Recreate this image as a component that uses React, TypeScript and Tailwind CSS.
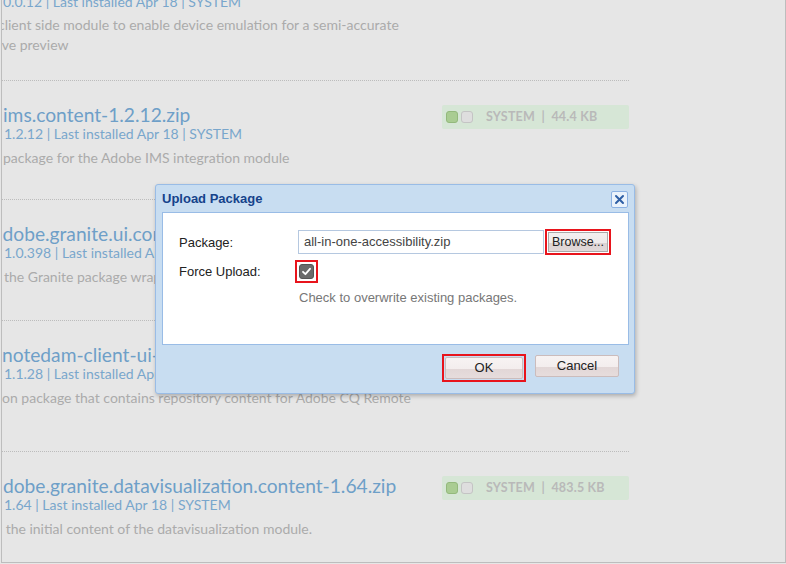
import React from "react";

function Badge({ size }: { size: string }) {
  return (
    <div className="w-[187px] h-[24px] bg-[#d6e6d6] rounded-[2px] flex items-center pl-[4px] shrink-0">
      <span className="w-[12px] h-[12px] rounded-[3px] bg-[#a9cc92] border border-[#93b97c]" />
      <span className="w-[12px] h-[12px] rounded-[3px] bg-[#dedede] border border-[#c4c4c4] ml-[3px]" />
      <span className="ml-[13px] text-[12.5px] font-bold text-[#b9b9b9] tracking-[0.2px] whitespace-pre" style={{ fontFamily: "Lato, 'Noto Sans', sans-serif" }}>
        {"SYSTEM  |  " + size}
      </span>
    </div>
  );
}

function Row({
  h,
  title,
  meta,
  desc,
  badge,
  tOff = 0,
  mOff = 0,
  dOff = 0,
}: {
  h: string;
  title: string;
  meta: string;
  desc: string;
  badge?: string;
  tOff?: number;
  mOff?: number;
  dOff?: number;
}) {
  return (
    <div className={`${h} w-[627px] border-b border-dotted border-[#bcbcbc] flex items-start pt-[22px] shrink-0`}>
      <div className="flex-1 overflow-hidden whitespace-nowrap">
        <div className="text-[19.2px] leading-[23px] text-[#6e9fc8]" style={{ marginLeft: tOff }}>{title}</div>
        <div className="text-[14px] leading-[20px] text-[#79a6cc] mt-[-2px]" style={{ marginLeft: mOff }}>{meta}</div>
        <div className="text-[14px] leading-[20px] text-[#ababab] mt-[4px]" style={{ marginLeft: dOff }}>{desc}</div>
      </div>
      {badge && (
        <div className="mt-[2px]">
          <Badge size={badge} />
        </div>
      )}
    </div>
  );
}

function BtnFace({ children, w }: { children: React.ReactNode; w: string }) {
  return (
    <div className={`${w} h-[22px] rounded-[2px] border border-[#cbbcbc] bg-[linear-gradient(#f7f3f3_0%,#f3eded_55%,#e2d7d7_56%,#e6dcdc_100%)] flex items-center justify-center text-[13px] text-[#222]`}>
      {children}
    </div>
  );
}

export default function App() {
  return (
    <div className="w-[786px] h-[564px] bg-[#e6e6e6] overflow-hidden relative" style={{ fontFamily: "Lato, 'Noto Sans', sans-serif" }}>
      <div className="w-[785px] h-[563px] ml-[1px] border-l border-r border-b border-[#bdbdbd] flex flex-col overflow-hidden">
        {/* row 0 partial */}
        <div className="h-[81px] w-[627px] border-b border-dotted border-[#bcbcbc] shrink-0 overflow-hidden whitespace-nowrap">
          <div className="text-[14px] leading-[20px] text-[#79a6cc] mt-[-8px] ml-[1px]">0.0.12 | Last installed Apr 18 | SYSTEM</div>
          <div className="text-[14px] leading-[20px] text-[#ababab] mt-[3px] ml-[-4px]">client side module to enable device emulation for a semi-accurate</div>
          <div className="text-[14px] leading-[20px] text-[#ababab] ml-[-7px]">live preview</div>
        </div>
        <Row
          h="h-[119px]"
          title="ims.content-1.2.12.zip"
          meta="1.2.12 | Last installed Apr 18 | SYSTEM"
          desc="package for the Adobe IMS integration module"
          badge="44.4 KB"
          tOff={1}
          mOff={2}
          dOff={1}
        />
        <Row
          h="h-[121px]"
          title="adobe.granite.ui.content-1.0.398.zip"
          meta="1.0.398 | Last installed Apr 18 | SYSTEM"
          desc="the Granite package wrapper for the UI"
          tOff={-9}
          mOff={2}
          dOff={2}
        />
        <Row
          h="h-[131px]"
          title="notedam-client-ui-1.1.28.zip"
          meta="1.1.28 | Last installed Apr 18 | SYSTEM"
          desc="on package that contains repository content for Adobe CQ Remote"
          tOff={0}
          mOff={2}
          dOff={0}
        />
        <Row
          h="h-[130px]"
          title="dobe.granite.datavisualization.content-1.64.zip"
          meta="1.64 | Last installed Apr 18 | SYSTEM"
          desc="s the initial content of the datavisualization module."
          badge="483.5 KB"
          tOff={1}
          mOff={2}
          dOff={-6}
        />
      </div>

      {/* dialog */}
      <div
        className="absolute left-[155px] top-[184px] w-[480px] h-[210px] bg-[#c8ddf1] border border-[#99bce6] rounded-[3px] shadow-[1px_2px_4px_rgba(0,0,0,0.25)] flex flex-col pl-[6px] pr-[5px]"
        style={{ fontFamily: "'Liberation Sans', Arial, sans-serif" }}
      >
        <div className="h-[27px] flex items-center justify-between shrink-0">
          <span className="text-[13px] font-bold text-[#15428b] mt-[1px]">Upload Package</span>
          <div className="w-[17px] h-[17px] mr-[1px] mt-[2px] rounded-[2px] border border-[#8db2e3] bg-[#eaf2fb] flex items-center justify-center">
            <svg width="11" height="11" viewBox="0 0 11 11">
              <path d="M2 2 L9 9 M9 2 L2 9" stroke="#2f5fa5" strokeWidth="2" strokeLinecap="round" />
            </svg>
          </div>
        </div>
        <div className="h-[133px] bg-white border border-[#99bce6] shrink-0 pl-[16px] pt-[16px] text-[13px] text-[#222]">
          <div className="flex items-center h-[26px]">
            <span className="w-[119px] mt-[1px]">Package:</span>
            <div className="w-[246px] h-[24px] border border-[#b5c8e0] flex items-center pl-[5px] text-[#444]">
              all-in-one-accessibility.zip
            </div>
            <div className="ml-[1px] border-2 border-[#e8141c] p-[1px]">
              <div className="w-[60px] h-[20px] border border-[#a9a9a9] bg-[linear-gradient(#f3efef_0%,#eeeaea_55%,#dcd2d2_56%,#e2d9d9_100%)] flex items-center justify-center text-[12.5px] text-[#222]">
                Browse...
              </div>
            </div>
          </div>
          <div className="flex items-center h-[23px] mt-[5px]">
            <span className="w-[116px]">Force Upload:</span>
            <div className="w-[23px] h-[23px] border-2 border-[#e8141c] flex items-center justify-center">
              <div className="w-[15px] h-[15px] rounded-[3px] bg-[#6a6a6a] border border-[#555] flex items-center justify-center">
                <svg width="11" height="11" viewBox="0 0 11 11">
                  <path d="M2 5.8 L4.4 8.2 L9 2.8" stroke="#fff" strokeWidth="1.8" fill="none" strokeLinecap="round" strokeLinejoin="round" />
                </svg>
              </div>
            </div>
          </div>
          <div className="ml-[120px] mt-[7px] text-[#777] leading-[16px]">Check to overwrite existing packages.</div>
        </div>
        <div className="flex justify-end items-start pt-[9px] pr-[10px] gap-[9px]">
          <div className="border-2 border-[#e8141c] p-[1px]">
            <BtnFace w="w-[78px]">OK</BtnFace>
          </div>
          <div className="pt-[1px]">
            <BtnFace w="w-[84px]">Cancel</BtnFace>
          </div>
        </div>
      </div>
    </div>
  );
}
